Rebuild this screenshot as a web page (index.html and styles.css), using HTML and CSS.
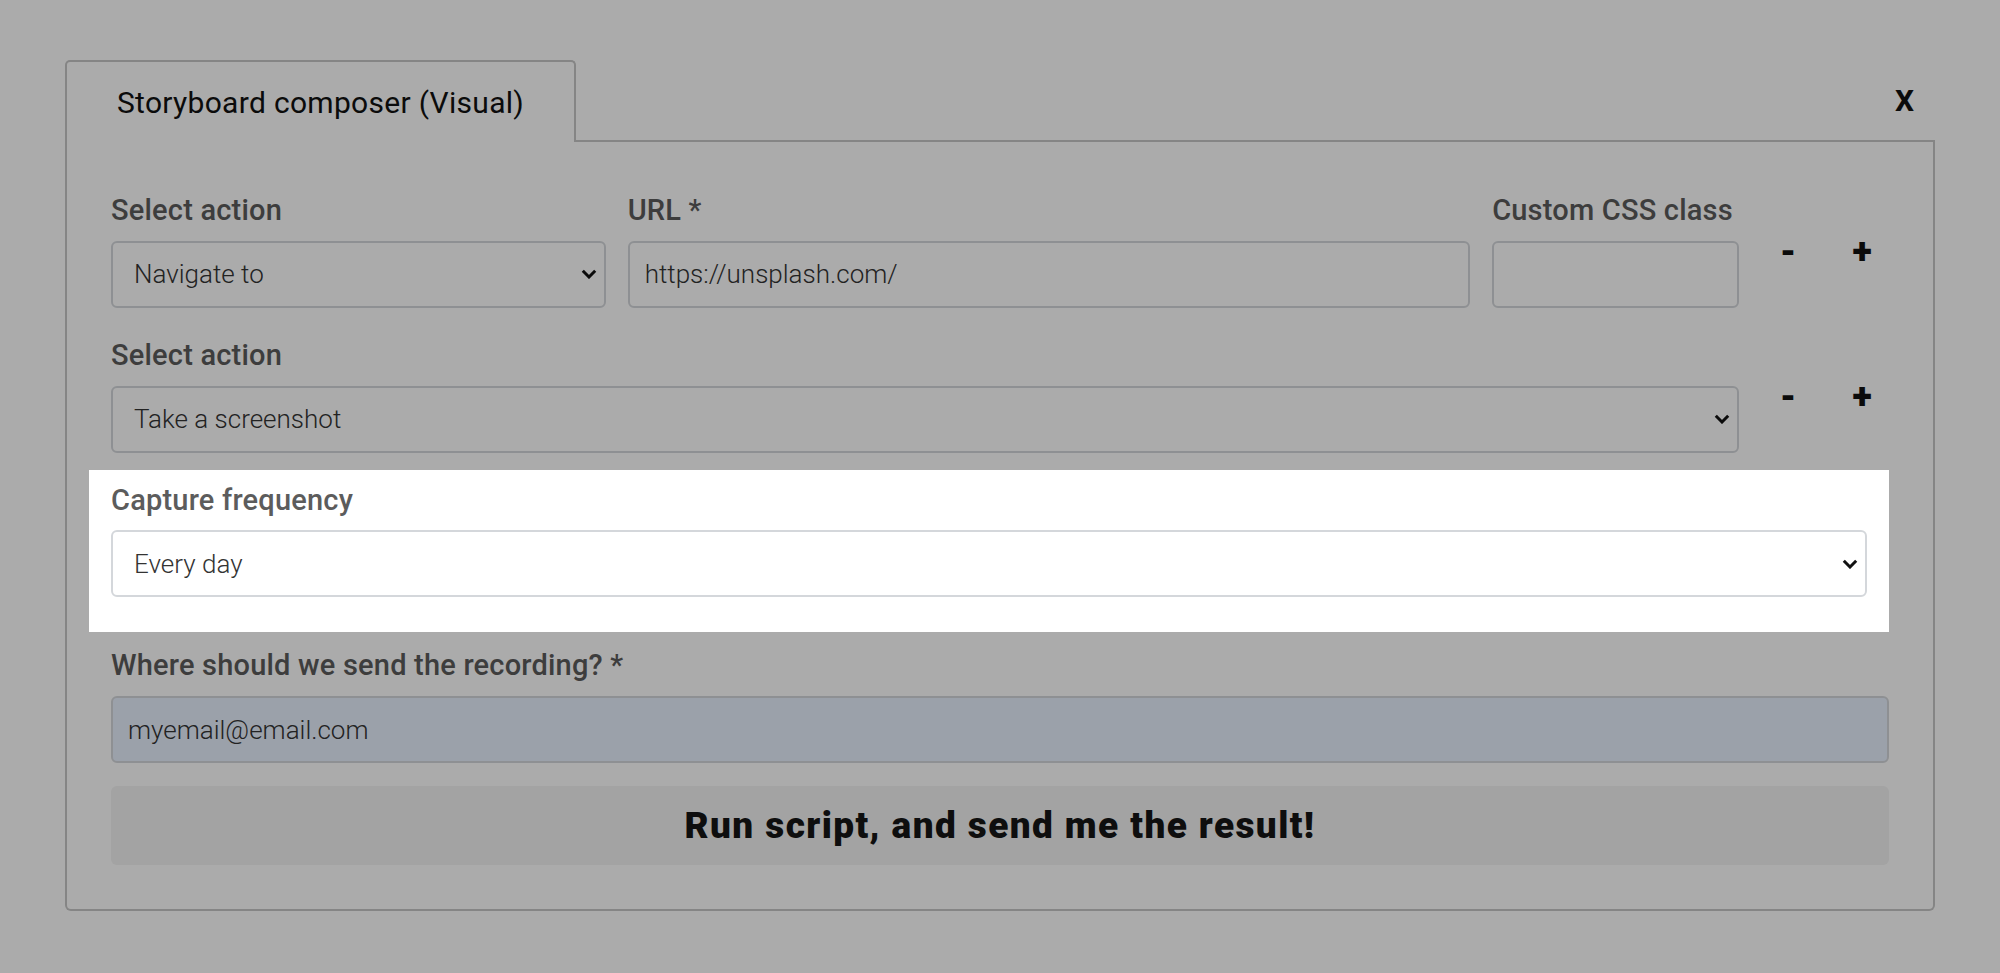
FILE: index.html
```html
<!DOCTYPE html>
<html lang="en">
<head>
    <meta charset="UTF-8">
    <title>Storyboard composer</title>
    <link rel="stylesheet" href="styles.css">
</head>
<body>
    <div class="composer">
        <div class="tab-bar">
            <div class="tab">Storyboard composer (Visual)</div>
            <div class="tab-rest">
                <button class="close-btn">X</button>
            </div>
        </div>
        <div class="panel">
            <div class="step">
                <div class="step-fields three">
                    <div class="field">
                        <label for="action-1">Select action</label>
                        <select id="action-1" class="control">
                            <option>Navigate to</option>
                            <option>Take a screenshot</option>
                        </select>
                    </div>
                    <div class="field">
                        <label for="url">URL *</label>
                        <input type="text" id="url" class="control" value="https://unsplash.com/">
                    </div>
                    <div class="field">
                        <label for="css-class">Custom CSS class</label>
                        <input type="text" id="css-class" class="control">
                    </div>
                </div>
                <div class="step-actions">
                    <button class="step-btn">-</button>
                    <button class="step-btn">+</button>
                </div>
            </div>
            <div class="step">
                <div class="step-fields">
                    <div class="field">
                        <label for="action-2">Select action</label>
                        <select id="action-2" class="control">
                            <option>Navigate to</option>
                            <option selected>Take a screenshot</option>
                        </select>
                    </div>
                </div>
                <div class="step-actions">
                    <button class="step-btn">-</button>
                    <button class="step-btn">+</button>
                </div>
            </div>
            <div class="field highlight">
                <label for="frequency">Capture frequency</label>
                <select id="frequency" class="control">
                    <option>Every day</option>
                    <option>Every week</option>
                    <option>Every month</option>
                </select>
            </div>
            <div class="field">
                <label for="email">Where should we send the recording? *</label>
                <input type="email" id="email" class="control autofilled" value="myemail@email.com">
            </div>
            <button class="run-btn">Run script, and send me the result!</button>
        </div>
    </div>
</body>
</html>
```

FILE: styles.css
```css
html {
    height: 100%;
}

body {
    font-family: Roboto, "Liberation Sans", sans-serif;
    background-color: #fff;
    margin: 0;
    padding: 60px 0 0;
    min-height: 100%;
    box-sizing: border-box;
}

.composer {
    margin: 0 65px;
}

.tab-bar {
    display: flex;
    height: 82px;
}

.tab {
    display: flex;
    align-items: center;
    padding: 0 50px;
    border: 2px solid #c6c6c6;
    border-bottom: none;
    border-radius: 5px 5px 0 0;
    font-size: 30px;
    letter-spacing: 0.3px;
    color: #111;
}

.tab-rest {
    flex: 1;
    display: flex;
    align-items: center;
    justify-content: flex-end;
    padding-right: 21px;
    border-bottom: 2px solid #c6c6c6;
}

.close-btn {
    background: none;
    border: none;
    padding: 0;
    font-family: inherit;
    font-size: 30px;
    font-weight: 700;
    color: #111;
    cursor: pointer;
}

.panel {
    border: 2px solid #c6c6c6;
    border-top: none;
    border-radius: 0 0 6px 6px;
    padding: 51px 44px 44px;
}

.step {
    display: flex;
    margin-bottom: 30px;
}

.step-fields {
    flex: 1;
    display: grid;
    grid-template-columns: 1fr;
    column-gap: 22px;
}

.step-fields.three {
    grid-template-columns: 495fr 843fr 247fr;
}

.step-actions {
    width: 150px;
    box-sizing: border-box;
    display: flex;
    gap: 24px;
    padding: 44px 0 0 24px;
}

.step-btn {
    width: 50px;
    height: 30px;
    padding: 0;
    background: none;
    border: none;
    font-family: inherit;
    font-size: 36px;
    font-weight: 900;
    line-height: 30px;
    color: #111;
    cursor: pointer;
}

.field label {
    display: block;
    font-size: 29px;
    font-weight: 500;
    line-height: 1.2;
    letter-spacing: 0.2px;
    color: #5c5c5c;
    margin-bottom: 13px;
}

.control {
    display: block;
    width: 100%;
    height: 67px;
    box-sizing: border-box;
    border: 2px solid #d4d7db;
    border-radius: 6px;
    background-color: #fff;
    padding: 0 15px;
    font-family: inherit;
    font-size: 26px;
    font-weight: 300;
    color: #333;
}

select.control {
    appearance: none;
    padding-left: 21px;
    background-image: url("data:image/svg+xml,%3Csvg xmlns='http://www.w3.org/2000/svg' viewBox='0 0 16 10'%3E%3Cpath d='M1.8 1.8l6.2 6.2 6.2-6.2' fill='none' stroke='%23111' stroke-width='3'/%3E%3C/svg%3E");
    background-repeat: no-repeat;
    background-position: right 7px center;
    background-size: 16px 10px;
}

.control.autofilled {
    background-color: #e8f0fe;
}

.highlight {
    position: relative;
    z-index: 1;
    background-color: #fff;
    padding: 13px 22px 35px;
    margin: -13px 0 16px -22px;
    box-shadow: 0 0 0 4000px rgba(0, 0, 0, 0.33);
}

.run-btn {
    display: block;
    width: 100%;
    height: 79px;
    margin-top: 23px;
    border: none;
    border-radius: 6px;
    background-color: #f3f3f3;
    font-family: inherit;
    font-size: 37px;
    font-weight: 900;
    letter-spacing: 1.4px;
    color: #151515;
    cursor: pointer;
}
```
